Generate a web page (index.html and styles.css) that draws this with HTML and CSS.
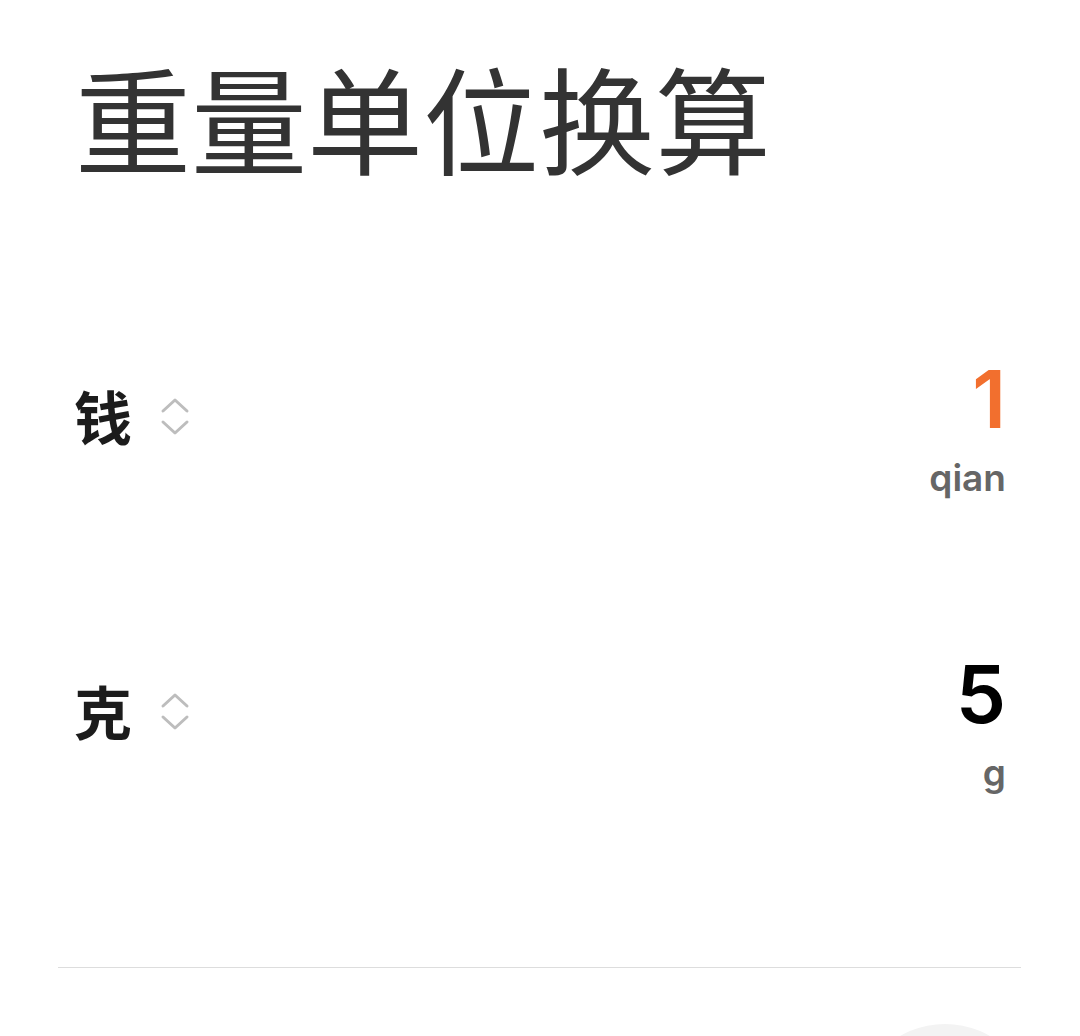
FILE: index.html
```html
<!DOCTYPE html>
<html lang="zh">
<head>
<meta charset="utf-8">
<link rel="stylesheet" href="styles.css">
</head>
<body>
<div class="page">
  <h1 class="title">重量单位换算</h1>
  <div class="rows">
    <div class="row">
      <div class="unit">
        <span class="unit-name">钱</span>
        <svg class="sorter" width="30" height="42" viewBox="0 0 30 42">
          <polyline points="3,15 15,4 27,15" />
          <polyline points="3,26 15,37 27,26" />
        </svg>
      </div>
      <div class="value">
        <div class="num active">1</div>
        <div class="sym">qian</div>
      </div>
    </div>
    <div class="row">
      <div class="unit">
        <span class="unit-name">克</span>
        <svg class="sorter" width="30" height="42" viewBox="0 0 30 42">
          <polyline points="3,15 15,4 27,15" />
          <polyline points="3,26 15,37 27,26" />
        </svg>
      </div>
      <div class="value">
        <div class="num">5</div>
        <div class="sym">g</div>
      </div>
    </div>
  </div>
  <div class="divider"></div>
  <div class="fab-area"><div class="fab"></div></div>
</div>
</body>
</html>
```
FILE: styles.css
```css
html, body {
  margin: 0;
  padding: 0;
  background: #ffffff;
}
.page {
  width: 1080px;
  height: 1036px;
  overflow: hidden;
  font-family: "Noto Sans CJK SC", "Noto Sans", sans-serif;
}
.title {
  margin: 0;
  padding: 40px 0 0 75px;
  font-size: 116px;
  font-weight: 400;
  line-height: 150px;
  color: #333333;
}
.rows {
  display: flex;
  flex-direction: column;
  padding: 164px 74px 0 74px;
  gap: 160px;
}
.row {
  display: flex;
  justify-content: space-between;
  align-items: flex-start;
  height: 135px;
}
.unit {
  display: flex;
  align-items: center;
  gap: 28px;
  margin-top: 31px;
}
.unit-name {
  font-size: 58px;
  font-weight: 700;
  color: #1c1c1c;
  line-height: 60px;
}
.sorter {
  margin-top: 4px;
}
.sorter polyline {
  fill: none;
  stroke: #bdbdbd;
  stroke-width: 3;
  stroke-linecap: round;
  stroke-linejoin: round;
}
.value {
  display: flex;
  flex-direction: column;
  align-items: flex-end;
  font-family: Inter, "Noto Sans", sans-serif;
}
.num {
  font-size: 80px;
  font-weight: 600;
  line-height: 90px;
  color: #000000;
}
.num.active {
  color: #f26f2e;
}
.sym {
  margin-top: 11px;
  font-size: 37px;
  font-weight: 600;
  line-height: 46px;
  color: #666666;
}
.divider {
  margin: 183px 59px 0 58px;
  height: 1px;
  background: #dddddd;
}
.fab-area {
  display: flex;
  justify-content: flex-end;
  padding: 56px 45px 0 0;
}
.fab {
  width: 180px;
  height: 180px;
  border-radius: 50%;
  background: #f3f3f3;
}
```
